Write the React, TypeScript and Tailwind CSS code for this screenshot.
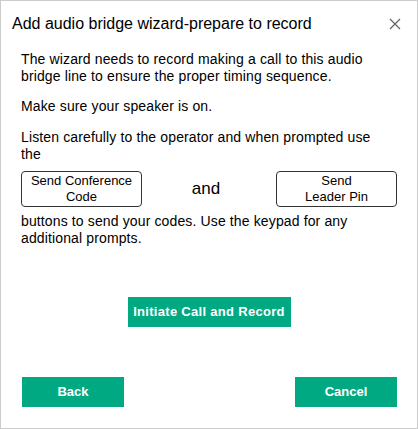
import React from "react";

export default function App() {
  return (
    <div className="w-[418px] h-[429px] border border-[#cccccc] bg-white flex flex-col text-black font-['Liberation_Sans',Arial,sans-serif]">
      <div className="flex items-center justify-between pt-[13px] pl-[11px] pr-[16px]">
        <div className="text-[16px] leading-[20px]">Add audio bridge wizard-prepare to record</div>
        <svg width="12" height="12" viewBox="0 0 12 12" className="mt-[-1px]">
          <path d="M1 1 L11 11 M11 1 L1 11" stroke="#666666" strokeWidth="1.3" fill="none" />
        </svg>
      </div>

      <div className="px-5 mt-[17px] text-[14px] leading-[17px] tracking-[0.13px]">
        <p className="pr-[11px]">The wizard needs to record making a call to this audio bridge line to ensure the proper timing sequence.</p>
        <p className="mt-[13px]">Make sure your speaker is on.</p>
        <p className="mt-[14px] pr-[11px]">Listen carefully to the operator and when prompted use the</p>
        <div className="mt-[8px] flex items-center justify-between tracking-normal">
          <button className="w-[121px] h-[36px] border border-[#333] rounded-[4px] bg-white text-[13px] leading-[16px] text-center">
            Send Conference
            <br />
            Code
          </button>
          <span className="text-[17px] leading-[20px] mr-[6px]">and</span>
          <button className="w-[121px] h-[36px] border border-[#333] rounded-[4px] bg-white text-[13px] leading-[16px] text-center">
            Send
            <br />
            Leader Pin
          </button>
        </div>
        <p className="mt-[6px] pr-[11px]">buttons to send your codes. Use the keypad for any additional prompts.</p>
      </div>

      <div className="mt-[50px] flex justify-center">
        <button className="w-[163px] h-[30px] bg-[#01a982] text-white font-bold text-[13px] tracking-[0.3px]">Initiate Call and Record</button>
      </div>

      <div className="mt-[50px] flex justify-between pl-[21px] pr-[20px]">
        <button className="w-[102px] h-[30px] bg-[#01a982] text-white font-bold text-[13px]">Back</button>
        <button className="w-[102px] h-[30px] bg-[#01a982] text-white font-bold text-[13px]">Cancel</button>
      </div>
    </div>
  );
}
